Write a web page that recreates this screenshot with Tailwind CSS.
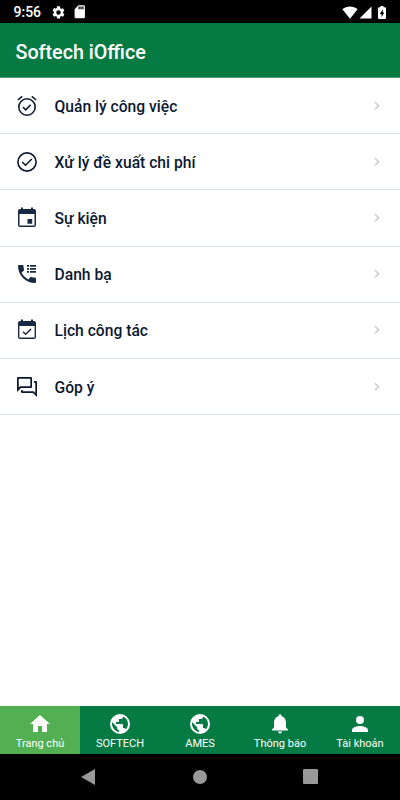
<!DOCTYPE html>
<html lang="vi">
<head>
<meta charset="utf-8">
<meta name="viewport" content="width=device-width, initial-scale=1">
<title>Softech iOffice</title>
<script src="https://cdn.jsdelivr.net/npm/@tailwindcss/browser@4"></script>
</head>
<body class="bg-black">
<div class="w-[400px] h-[800px] flex flex-col overflow-hidden bg-white font-[Roboto,'Noto_Sans',sans-serif]">
  <div class="h-[23px] shrink-0 bg-black text-white flex items-center pl-[13.5px] pr-[11px] pt-px">
    <span class="text-[14px] leading-none font-medium w-[37px]">9:56</span>
    <svg class="size-[15px]" viewBox="0 0 24 24" fill="currentColor"><path d="M19.14 12.94c.04-.3.06-.61.06-.94s-.02-.64-.07-.94l2.03-1.58a.49.49 0 0 0 .12-.61l-1.92-3.32a.49.49 0 0 0-.59-.22l-2.39.96a7 7 0 0 0-1.62-.94l-.36-2.54A.48.48 0 0 0 13.92 2h-3.84a.47.47 0 0 0-.47.41l-.36 2.54c-.59.24-1.13.57-1.62.94l-2.39-.96a.48.48 0 0 0-.59.22L2.74 8.87a.47.47 0 0 0 .12.61l2.03 1.58a6 6 0 0 0-.02 1.88l-2.03 1.58a.49.49 0 0 0-.12.61l1.92 3.32c.12.22.37.29.59.22l2.39-.96c.5.38 1.03.7 1.62.94l.36 2.54c.05.24.24.41.48.41h3.84c.24 0 .44-.17.47-.41l.36-2.54c.59-.24 1.13-.56 1.62-.94l2.39.96c.22.08.47 0 .59-.22l1.92-3.32a.47.47 0 0 0-.12-.61zM12 15.6a3.6 3.6 0 1 1 0-7.2 3.6 3.6 0 0 1 0 7.2"/></svg>
    <svg class="size-[15.5px] ml-[6px]" viewBox="0 0 24 24" fill="currentColor"><path d="M18 2h-8L4.020 8 4 20a2 2 0 0 0 2 2h12a2 2 0 0 0 2-2V4a2 2 0 0 0-2-2m-6 6h-2V4h2zm3 0h-2V4h2zm3 0h-2V4h2z"/></svg>
    <div class="flex-1"></div>
    <svg class="w-[16px] h-[13px]" viewBox="0 0 16 13" fill="currentColor"><path d="M.4 3.200C4.600-.4 11.400-.4 15.600 3.200L8 12.700z"/></svg>
    <svg class="w-[13px] h-[13px] ml-[1px]" viewBox="0 0 13 13" fill="currentColor"><path d="M12.500.500v12H.500z"/></svg>
    <svg class="w-[8px] h-[13px] ml-[6px] mr-[3px]" viewBox="0 0 8 13"><path d="M2.500 0h3v1.300H7q1 0 1 1V12q0 1-1 1H1q-1 0-1-1V2.300q0-1 1-1h1.500z" fill="#fff"/><path d="M4.800 3.300 1.800 8h1.700v3.200L6.300 6.500H4.800z" fill="#000"/></svg>
  </div>
  <header class="h-[55px] shrink-0 bg-[#067a43] border-b border-[#4d9a75] flex items-center pl-[15.500px] pt-[5px]">
    <h1 class="text-white text-[19.7px] leading-none font-medium whitespace-nowrap">Softech iOffice</h1>
  </header>
  <main class="flex-1 text-[#0b1930]">
    <a class="h-[56.2px] border-b border-[#dce4e6] flex items-center pl-[15px] pr-[15px]">
      <svg class="size-6 shrink-0" viewBox="0 0 24 24" fill="none" stroke="currentColor" stroke-width="1.600"><circle cx="12" cy="13" r="8.200"/><path d="m2.800 6 4.400-3.700M21.200 6l-4.400-3.700M8 13.200l2.700 2.600 5-5"/></svg>
      <span class="ml-[15.500px] flex-1 text-[15.650px] leading-6 font-medium pt-[2px]">Quản lý công việc</span>
      <svg class="size-4" viewBox="0 0 16 16" fill="none" stroke="#c4c6c8" stroke-width="1.300"><path d="m6 4.200 3.700 3.500L6 11.200"/></svg>
    </a>
    <a class="h-[56.2px] border-b border-[#dce4e6] flex items-center pl-[15px] pr-[15px]">
      <svg class="size-6 shrink-0" viewBox="0 0 24 24" fill="none" stroke="currentColor" stroke-width="1.600"><circle cx="12" cy="12" r="9.100"/><path d="m7.200 12 3.300 3.200 6.300-6.200"/></svg>
      <span class="ml-[15.500px] flex-1 text-[15.650px] leading-6 font-medium pt-[2px]">Xử lý đề xuất chi phí</span>
      <svg class="size-4" viewBox="0 0 16 16" fill="none" stroke="#c4c6c8" stroke-width="1.300"><path d="m6 4.200 3.700 3.500L6 11.200"/></svg>
    </a>
    <a class="h-[56.2px] border-b border-[#dce4e6] flex items-center pl-[15px] pr-[15px]">
      <svg class="size-6 shrink-0 text-[#172a41]" viewBox="0 0 24 24" fill="currentColor"><path d="M17.200 13h-4.700v4.700h4.700zM16 1.500V3H8V1.500H6V3H5a2 2 0 0 0-2 2v14a2 2 0 0 0 2 2h14a2 2 0 0 0 2-2V5a2 2 0 0 0-2-2h-1V1.500zm3.500 18h-15V8h15z"/></svg>
      <span class="ml-[15.500px] flex-1 text-[15.650px] leading-6 font-medium pt-[2px]">Sự kiện</span>
      <svg class="size-4" viewBox="0 0 16 16" fill="none" stroke="#c4c6c8" stroke-width="1.300"><path d="m6 4.200 3.700 3.500L6 11.200"/></svg>
    </a>
    <a class="h-[56.2px] border-b border-[#dce4e6] flex items-center pl-[15px] pr-[15px]">
      <svg class="size-6 shrink-0 text-[#172a41]" viewBox="0 0 24 24" fill="currentColor"><path d="M20 15.500a1 1 0 0 1 1 1V20a1 1 0 0 1-1 1A17 17 0 0 1 3 4a1 1 0 0 1 1-1h3.500a1 1 0 0 1 1 1c0 1.240.2 2.450.57 3.570.11.350.03.740-.25 1.020l-2.200 2.200c1.440 2.830 3.760 5.140 6.590 6.590l2.200-2.200c.28-.28.670-.36 1.020-.25 1.120.37 2.320.57 3.570.57M12 3h2v1.700h-2zm3 0h6v1.700h-6zm-3 3h2v1.700h-2zm3 0h6v1.700h-6zm-3 3h2v1.700h-2zm3 0h6v1.700h-6z"/></svg>
      <span class="ml-[15.500px] flex-1 text-[15.650px] leading-6 font-medium pt-[2px]">Danh bạ</span>
      <svg class="size-4" viewBox="0 0 16 16" fill="none" stroke="#c4c6c8" stroke-width="1.300"><path d="m6 4.200 3.700 3.500L6 11.200"/></svg>
    </a>
    <a class="h-[56.2px] border-b border-[#dce4e6] flex items-center pl-[15px] pr-[15px]">
      <svg class="size-6 shrink-0 text-[#172a41]" viewBox="0 0 24 24" fill="currentColor"><path d="M16 1.500V3H8V1.500H6V3H5a2 2 0 0 0-2 2v14a2 2 0 0 0 2 2h14a2 2 0 0 0 2-2V5a2 2 0 0 0-2-2h-1V1.500zm3.600 18.100H4.400V8h15.200z"/><path d="m8 13.700 2.700 2.600 5.300-5.300" fill="none" stroke="currentColor" stroke-width="1.500"/></svg>
      <span class="ml-[15.500px] flex-1 text-[15.650px] leading-6 font-medium pt-[2px]">Lịch công tác</span>
      <svg class="size-4" viewBox="0 0 16 16" fill="none" stroke="#c4c6c8" stroke-width="1.300"><path d="m6 4.200 3.700 3.500L6 11.200"/></svg>
    </a>
    <a class="h-[56.2px] border-b border-[#dce4e6] flex items-center pl-[15px] pr-[15px]">
      <svg class="size-6 shrink-0" viewBox="0 0 24 24" fill="currentColor"><path d="M15.300 3.700v7.600H5l-1.300 1.300V3.700zM16 2H3a1 1 0 0 0-1 1v14l4-4h10a1 1 0 0 0 1-1V3a1 1 0 0 0-1-1m5 4h-2v1.700h1.300v10.200L18.700 16.300H7.700V15H6v2a1 1 0 0 0 1 1h11l4 4V7a1 1 0 0 0-1-1"/></svg>
      <span class="ml-[15.500px] flex-1 text-[15.650px] leading-6 font-medium pt-[2px]">Góp ý</span>
      <svg class="size-4" viewBox="0 0 16 16" fill="none" stroke="#c4c6c8" stroke-width="1.300"><path d="m6 4.200 3.700 3.500L6 11.200"/></svg>
    </a>
  </main>
  <nav class="h-[48px] shrink-0 bg-[#067a43] text-white grid grid-cols-5 text-[11px] leading-[15px] text-center whitespace-nowrap">
    <a class="bg-[#52b052] flex flex-col items-center pt-[6px]">
      <svg class="size-6" viewBox="0 0 24 24" fill="currentColor"><path d="M10 20v-6h4v6h5v-8h3L12 3 2 12h3v8z"/></svg><span>Trang chủ</span></a>
    <a class="flex flex-col items-center pt-[6px]">
      <svg class="size-6" viewBox="0 0 24 24" fill="currentColor"><path d="M12 2a10 10 0 1 0 0 20 10 10 0 0 0 0-20m-1 17.930A8 8 0 0 1 4.210 10.210L9 15v1a2 2 0 0 0 2 2zm6.900-2.540A2 2 0 0 0 16 16h-1v-3a1 1 0 0 0-1-1H8v-2h2a1 1 0 0 0 1-1V7h2a2 2 0 0 0 2-2v-.41a8 8 0 0 1 2.900 12.800"/></svg><span>SOFTECH</span></a>
    <a class="flex flex-col items-center pt-[6px]">
      <svg class="size-6" viewBox="0 0 24 24" fill="currentColor"><path d="M12 2a10 10 0 1 0 0 20 10 10 0 0 0 0-20m-1 17.930A8 8 0 0 1 4.210 10.210L9 15v1a2 2 0 0 0 2 2zm6.900-2.540A2 2 0 0 0 16 16h-1v-3a1 1 0 0 0-1-1H8v-2h2a1 1 0 0 0 1-1V7h2a2 2 0 0 0 2-2v-.41a8 8 0 0 1 2.900 12.800"/></svg><span>AMES</span></a>
    <a class="flex flex-col items-center pt-[6px]">
      <svg class="size-6" viewBox="0 0 24 24" fill="currentColor"><path d="M12 21.500a2 2 0 0 0 2-2h-4a2 2 0 0 0 2 2m6-6v-5c0-3.070-1.640-5.640-4.500-6.320V3.700a1.500 1.500 0 0 0-3 0v.48C7.630 4.860 6 7.420 6 10.500v5l-2 2v1h16v-1z"/></svg><span>Thông báo</span></a>
    <a class="flex flex-col items-center pt-[6px]">
      <svg class="size-6" viewBox="0 0 24 24" fill="currentColor"><path d="M12 12a4 4 0 1 0 0-8 4 4 0 0 0 0 8m0 2c-2.670 0-8 1.340-8 4v2h16v-2c0-2.660-5.330-4-8-4"/></svg><span>Tài khoản</span></a>
  </nav>
  <div class="h-[46px] shrink-0 bg-black flex items-center justify-between pl-[81px] pr-[82px] pb-px">
    <svg class="w-[14px] h-[16px]" viewBox="0 0 14 16" fill="#999"><path d="M14 0v16L0 8z"/></svg>
    <div class="size-[14px] rounded-full bg-[#999] ml-[2px]"></div>
    <div class="size-[15px] rounded-[1px] bg-[#999]"></div>
  </div>
</div>
</body>
</html>
